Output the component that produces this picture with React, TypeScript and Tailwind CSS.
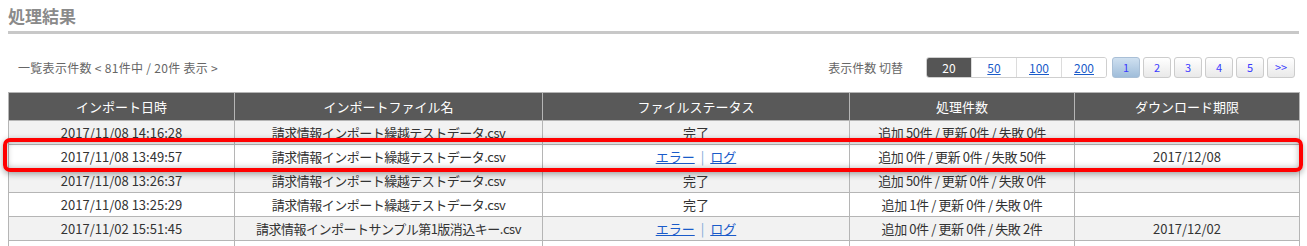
import React from 'react';

// ── Data ──────────────────────────────────────────────────────────────
interface Row {
  date: string;
  file: string;
  status: 'done' | 'error';
  counts: string;
  limit: string;
}

const ROWS: Row[] = [
  { date: '2017/11/08 14:16:28', file: '請求情報インポート繰越テストデータ.csv', status: 'done',  counts: '追加 50件 / 更新 0件 / 失敗 0件', limit: '' },
  { date: '2017/11/08 13:49:57', file: '請求情報インポート繰越テストデータ.csv', status: 'error', counts: '追加 0件 / 更新 0件 / 失敗 50件', limit: '2017/12/08' },
  { date: '2017/11/08 13:26:37', file: '請求情報インポート繰越テストデータ.csv', status: 'done',  counts: '追加 50件 / 更新 0件 / 失敗 0件', limit: '' },
  { date: '2017/11/08 13:25:29', file: '請求情報インポート繰越テストデータ.csv', status: 'done',  counts: '追加 1件 / 更新 0件 / 失敗 0件',  limit: '' },
  { date: '2017/11/02 15:51:45', file: '請求情報インポートサンプル第1版消込キー.csv', status: 'error', counts: '追加 0件 / 更新 0件 / 失敗 2件', limit: '2017/12/02' },
  { date: '2017/11/02 15:40:12', file: '請求情報インポートサンプル第1版.csv', status: 'done', counts: '追加 2件 / 更新 0件 / 失敗 0件', limit: '' },
];

const PER_PAGE = ['20', '50', '100', '200'];
const PAGES = ['1', '2', '3', '4', '5', '>>'];

const HEADERS = ['インポート日時', 'インポートファイル名', 'ファイルステータス', '処理件数', 'ダウンロード期限'];

// ── Pieces ────────────────────────────────────────────────────────────
function PerPage() {
  return (
    <div className="flex h-[21px] border border-[#cfcfcf] rounded-[3px] overflow-hidden">
      {PER_PAGE.map((n, i) => (
        <div
          key={n}
          className={
            i === 0
              ? 'w-[44px] flex items-center justify-center bg-[#555555] text-white text-[12px]'
              : 'w-[45px] flex items-center justify-center bg-white border-l border-[#dcdcdc] text-[12px] text-[#1a5bc9] underline'
          }
        >
          {n}
        </div>
      ))}
    </div>
  );
}

function Pager() {
  return (
    <div className="flex gap-[3px]">
      {PAGES.map((p, i) => (
        <div
          key={p}
          className={
            i === 0
              ? 'w-[28px] h-[21px] flex items-center justify-center rounded-[3px] border border-[#a9bfd6] bg-gradient-to-b from-[#cfe0f0] to-[#9fbdda] text-[11px] text-[#3b3bff]'
              : 'w-[28px] h-[21px] flex items-center justify-center rounded-[3px] border border-[#cccccc] bg-gradient-to-b from-white to-[#e9e9e9] text-[11px] text-[#3b3bff]'
          }
        >
          {p}
        </div>
      ))}
    </div>
  );
}

function Status({ s }: { s: Row['status'] }) {
  if (s === 'done') return <span>完了</span>;
  return (
    <span>
      <span className="text-[#1a5bc9] underline">エラー</span>
      <span className="text-[#7aa7d8] mx-[6px]">|</span>
      <span className="text-[#1a5bc9] underline">ログ</span>
    </span>
  );
}

// ── Main ──────────────────────────────────────────────────────────────
export default function App() {
  return (
    <div
      className="relative w-[1307px] h-[246px] overflow-hidden bg-white px-2"
      style={{ fontFamily: '"Noto Sans CJK JP", "Noto Sans", sans-serif' }}
    >
      <h2 className="pt-[5px] pb-[4px] leading-[22px] text-[17px] font-bold text-[#8a8a8a] border-b-[3px] border-[#c8c8c8]">
        処理結果
      </h2>

      <div className="mt-[23px] flex items-center justify-between">
        <div className="pl-[10px] text-[12px] text-[#666666] tracking-[0.3px]">一覧表示件数 &lt; 81件中 / 20件 表示 &gt;</div>
        <div className="flex items-center pr-[4px]">
          <span className="text-[12px] text-[#666666] mr-[23px]">表示件数 切替</span>
          <PerPage />
          <div className="ml-[5px]">
            <Pager />
          </div>
        </div>
      </div>

      <table className="mt-[14px] w-[1291px] border-collapse table-fixed text-[13px] text-[#333333]">
        <colgroup>
          <col className="w-[226px]" />
          <col className="w-[308px]" />
          <col className="w-[307px]" />
          <col className="w-[225px]" />
          <col className="w-[225px]" />
        </colgroup>
        <thead>
          <tr className="h-[28px] bg-[#595959]">
            {HEADERS.map(h => (
              <th key={h} className="border border-[#b5b5b5] font-normal text-white text-center">{h}</th>
            ))}
          </tr>
        </thead>
        <tbody>
          {ROWS.map((r, i) => (
            <tr key={i} className={`h-[24px] ${i % 2 === 0 ? 'bg-[#f2f2f2]' : 'bg-white'}`}>
              <td className="border border-[#b5b5b5] text-center">{r.date}</td>
              <td className="border border-[#b5b5b5] text-center tracking-[-0.5px]">{r.file}</td>
              <td className="border border-[#b5b5b5] text-center"><Status s={r.status} /></td>
              <td className="border border-[#b5b5b5] text-center tracking-[-0.4px]">{r.counts}</td>
              <td className="border border-[#b5b5b5] text-center">{r.limit}</td>
            </tr>
          ))}
        </tbody>
      </table>

      {/* red highlight over the second row */}
      <div className="absolute left-[3px] top-[138px] w-[1300px] h-[34px] border-[4px] border-[#ff0000] rounded-[7px] shadow-[0_2px_6px_rgba(0,0,0,0.35),inset_0_0_6px_rgba(0,0,0,0.3)]" />
    </div>
  );
}
